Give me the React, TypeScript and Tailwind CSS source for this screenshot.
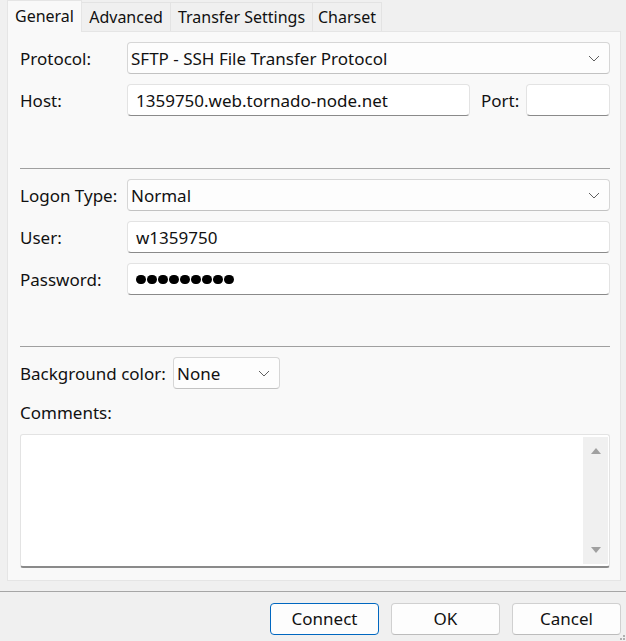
import React from "react";

const Chevron = () => (
  <svg width="12" height="7" viewBox="0 0 12 7" className="shrink-0">
    <path d="M1 1 L6 6 L11 1" fill="none" stroke="#5f5f5f" strokeWidth="1" />
  </svg>
);

const Select = ({ value, className = "" }: { value: string; className?: string }) => (
  <div
    className={`h-[32px] flex items-center justify-between pl-[3px] pr-[9px] bg-[#fdfdfd] border border-[#d6d6d6] border-b-[#c2c2c2] rounded-[4px] ${className}`}
  >
    <span className="pt-px">{value}</span>
    <Chevron />
  </div>
);

const Input = ({ children, className = "" }: { children?: React.ReactNode; className?: string }) => (
  <div
    className={`h-[32px] flex items-center pl-[8px] pt-px bg-white border border-[#e3e3e3] border-b-[#8a8a8a] rounded-[4px] ${className}`}
  >
    {children}
  </div>
);

const Row = ({ label, children }: { label: string; children: React.ReactNode }) => (
  <div className="flex items-center h-[32px]">
    <span className="w-[107px] shrink-0 pt-px">{label}</span>
    {children}
  </div>
);

const tabs = [
  { name: "General", w: "w-[75px]", active: true },
  { name: "Advanced", w: "w-[89px]" },
  { name: "Transfer Settings", w: "w-[142px]" },
  { name: "Charset", w: "w-[69px]" },
];

export default function App() {
  return (
    <div
      className="w-[626px] h-[641px] bg-[#f0f0f0] text-[#111] text-[17px] flex flex-col relative overflow-hidden"
      style={{ fontFamily: '"Noto Sans", "Open Sans", sans-serif' }}
    >
      {/* tab strip */}
      <div className="flex items-end h-[31px] pl-[7px] text-[16px]">
        {tabs.map((t) =>
          t.active ? (
            <div
              key={t.name}
              className={`${t.w} h-[32px] -mb-px z-10 bg-[#f9f9f9] border-x border-t border-[#e5e5e5] flex items-center justify-center pb-[1px]`}
            >
              {t.name}
            </div>
          ) : (
            <div
              key={t.name}
              className={`${t.w} h-[29px] bg-[#f0f0f0] border-t border-r border-[#e3e3e3] flex items-center justify-center`}
            >
              {t.name}
            </div>
          )
        )}
      </div>

      {/* tab page */}
      <div className="ml-[7px] w-[614px] h-[550px] bg-[#f9f9f9] border border-[#e5e5e5] pl-[12px] pr-[10px] pt-[10px] flex flex-col">
        <Row label="Protocol:">
          <Select value="SFTP - SSH File Transfer Protocol" className="flex-1" />
        </Row>
        <div className="mt-[10px]">
          <Row label="Host:">
            <Input className="w-[343px]">1359750.web.tornado-node.net</Input>
            <span className="ml-[11px] w-[45px] pt-px">Port:</span>
            <Input className="flex-1" />
          </Row>
        </div>

        <div className="mt-[52px] h-px bg-[#a0a0a0]" />

        <div className="mt-[10px] flex flex-col gap-[10px]">
          <Row label="Logon Type:">
            <Select value="Normal" className="flex-1" />
          </Row>
          <Row label="User:">
            <Input className="flex-1">w1359750</Input>
          </Row>
          <Row label="Password:">
            <Input className="flex-1">
              <div className="flex gap-[1.5px]">
                {Array.from({ length: 9 }).map((_, i) => (
                  <span key={i} className="w-[9.5px] h-[9.5px] rounded-full bg-black" />
                ))}
              </div>
            </Input>
          </Row>
        </div>

        <div className="mt-[51px] h-px bg-[#a0a0a0]" />

        <div className="mt-[10px] flex items-center h-[32px]">
          <span className="w-[153px] shrink-0 pt-px">Background color:</span>
          <Select value="None" className="w-[107px]" />
        </div>

        <div className="mt-[12px] h-[24px] leading-[24px]">Comments:</div>

        <div className="mt-[9px] h-[134px] flex bg-white border border-[#e3e3e3] border-b-[#8a8a8a] border-b-2 rounded-[3px]">
          <div className="flex-1" />
          <div className="w-[25px] my-[2px] mr-px bg-[#f0f0f0] flex flex-col items-center justify-between py-[10px]">
            <svg width="12" height="8" viewBox="0 0 12 8">
              <path d="M1 7 L6 1 L11 7 Z" fill="#a0a0a0" />
            </svg>
            <svg width="12" height="8" viewBox="0 0 12 8">
              <path d="M1 1 L6 7 L11 1 Z" fill="#a0a0a0" />
            </svg>
          </div>
        </div>
      </div>

      {/* footer */}
      <div className="mt-[10px] h-px bg-[#a6a6a6]" />
      <div className="flex justify-end gap-[12px] pr-[5px] pt-[11px]">
        <button className="w-[109px] h-[32px] rounded-[4px] bg-[#fdfdfd] border border-[#0067c0] text-[#111]">
          Connect
        </button>
        <button className="w-[109px] h-[32px] rounded-[4px] bg-[#fdfdfd] border border-[#d0d0d0] border-b-[#bcbcbc] text-[#111]">
          OK
        </button>
        <button className="w-[109px] h-[32px] rounded-[4px] bg-[#fdfdfd] border border-[#d0d0d0] border-b-[#bcbcbc] text-[#111]">
          Cancel
        </button>
      </div>

      {/* size grip */}
      <div className="absolute right-[1px] bottom-[1px] grid grid-cols-2 gap-[1px]">
        <span />
        <span className="w-[2px] h-[2px] bg-[#b0b0b0]" />
        <span className="w-[2px] h-[2px] bg-[#b0b0b0]" />
        <span className="w-[2px] h-[2px] bg-[#b0b0b0]" />
      </div>
    </div>
  );
}
